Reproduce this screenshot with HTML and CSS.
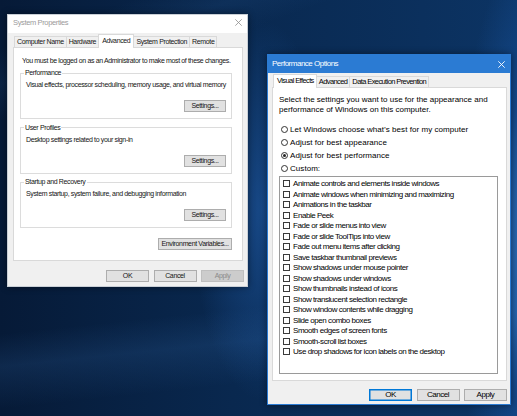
FILE: index.html
```html
<!DOCTYPE html>
<html lang="en">
<head>
<meta charset="utf-8">
<title>System Properties</title>
<link rel="stylesheet" href="styles.css">
</head>
<body>
<div class="desktop">

  <section class="win sysprop">
    <header class="titlebar">
      <span class="title">System Properties</span>
      <svg class="close" viewBox="0 0 7 7" width="7" height="7"><path d="M0.3 0.3L6.7 6.7M6.7 0.3L0.3 6.7"/></svg>
    </header>
    <div class="winbody">
      <nav class="tabs">
        <span class="tab">Computer Name</span>
        <span class="tab">Hardware</span>
        <span class="tab active">Advanced</span>
        <span class="tab">System Protection</span>
        <span class="tab">Remote</span>
      </nav>
      <div class="panel">
        <p class="note">You must be logged on as an Administrator to make most of these changes.</p>
        <fieldset class="group">
          <legend>Performance</legend>
          <p>Visual effects, processor scheduling, memory usage, and virtual memory</p>
          <div class="grp-actions"><button class="btn set">Settings...</button></div>
        </fieldset>
        <fieldset class="group">
          <legend>User Profiles</legend>
          <p>Desktop settings related to your sign-in</p>
          <div class="grp-actions"><button class="btn set">Settings...</button></div>
        </fieldset>
        <fieldset class="group">
          <legend>Startup and Recovery</legend>
          <p>System startup, system failure, and debugging information</p>
          <div class="grp-actions"><button class="btn set">Settings...</button></div>
        </fieldset>
        <div class="env"><button class="btn envbtn">Environment Variables...</button></div>
      </div>
      <footer class="actions">
        <button class="btn act">OK</button>
        <button class="btn act">Cancel</button>
        <button class="btn act" disabled>Apply</button>
      </footer>
    </div>
  </section>

  <section class="win perf">
    <header class="titlebar">
      <span class="title">Performance Options</span>
      <svg class="close" viewBox="0 0 7 7" width="7" height="7"><path d="M0.3 0.3L6.7 6.7M6.7 0.3L0.3 6.7"/></svg>
    </header>
    <div class="winbody">
      <nav class="tabs">
        <span class="tab active">Visual Effects</span>
        <span class="tab">Advanced</span>
        <span class="tab">Data Execution Prevention</span>
      </nav>
      <div class="panel">
        <p class="intro">Select the settings you want to use for the appearance and performance of Windows on this computer.</p>
        <div class="radios">
          <div class="radio"><span class="rb"></span>Let Windows choose what’s best for my computer</div>
          <div class="radio"><span class="rb"></span>Adjust for best appearance</div>
          <div class="radio"><span class="rb on"></span>Adjust for best performance</div>
          <div class="radio"><span class="rb"></span>Custom:</div>
        </div>
        <div class="list">
          <div class="item"><span class="cb"></span>Animate controls and elements inside windows</div>
          <div class="item"><span class="cb"></span>Animate windows when minimizing and maximizing</div>
          <div class="item"><span class="cb"></span>Animations in the taskbar</div>
          <div class="item"><span class="cb"></span>Enable Peek</div>
          <div class="item"><span class="cb"></span>Fade or slide menus into view</div>
          <div class="item"><span class="cb"></span>Fade or slide ToolTips into view</div>
          <div class="item"><span class="cb"></span>Fade out menu items after clicking</div>
          <div class="item"><span class="cb"></span>Save taskbar thumbnail previews</div>
          <div class="item"><span class="cb"></span>Show shadows under mouse pointer</div>
          <div class="item"><span class="cb"></span>Show shadows under windows</div>
          <div class="item"><span class="cb"></span>Show thumbnails instead of icons</div>
          <div class="item"><span class="cb"></span>Show translucent selection rectangle</div>
          <div class="item"><span class="cb"></span>Show window contents while dragging</div>
          <div class="item"><span class="cb"></span>Slide open combo boxes</div>
          <div class="item"><span class="cb"></span>Smooth edges of screen fonts</div>
          <div class="item"><span class="cb"></span>Smooth-scroll list boxes</div>
          <div class="item"><span class="cb"></span>Use drop shadows for icon labels on the desktop</div>
        </div>
      </div>
      <footer class="actions">
        <button class="btn act default">OK</button>
        <button class="btn act">Cancel</button>
        <button class="btn act">Apply</button>
      </footer>
    </div>
  </section>

</div>
</body>
</html>
```

FILE: styles.css
```css
* { box-sizing: border-box; }

html, body {
  margin: 0;
  padding: 0;
}

body {
  width: 517px;
  height: 416px;
  overflow: hidden;
  font-family: "Liberation Sans", Arial, sans-serif;
}

.desktop {
  position: relative;
  width: 517px;
  height: 416px;
  overflow: hidden;
  background:
    radial-gradient(ellipse 90px 320px at 545px 250px, rgba(70, 150, 235, 0.9), rgba(30, 100, 190, 0.4) 55%, rgba(20, 70, 150, 0) 100%),
    radial-gradient(ellipse 70px 190px at 262px 210px, rgba(40, 110, 200, 0.45), rgba(40, 110, 200, 0) 100%),
    linear-gradient(174deg, rgba(60, 120, 190, 0) 71%, rgba(60, 120, 190, 0.16) 78%, rgba(60, 120, 190, 0) 87%),
    linear-gradient(160deg, rgba(60, 120, 190, 0) 8%, rgba(60, 120, 190, 0.10) 14%, rgba(60, 120, 190, 0) 20%),
    linear-gradient(90deg, #061a37 0%, #09284f 45%, #0c3464 100%);
}

/* ---------- windows ---------- */
.win {
  position: absolute;
  display: flex;
  flex-direction: column;
  background: #f0f0f0;
  box-shadow: 0 0 7px rgba(0, 0, 0, 0.45);
}

.titlebar {
  flex: none;
  display: flex;
  justify-content: space-between;
  height: 18px;
}

.close {
  flex: none;
  fill: none;
}

.winbody {
  flex: 1;
  display: flex;
  flex-direction: column;
  min-height: 0;
}

.tabs {
  flex: none;
  height: 14px;
  display: flex;
  align-items: flex-end;
  padding-left: 1px;
  position: relative;
  z-index: 1;
}

.tab {
  height: 11px;
  line-height: 10px;
  padding: 0 2px;
  border: 1px solid #d9d9d9;
  border-bottom: none;
  margin-right: -1px;
  background: #f0f0f0;
  white-space: nowrap;
}

.tab.active {
  height: 14px;
  margin-bottom: -1px;
  line-height: 11px;
  background: #fff;
  padding: 0 3px;
  position: relative;
  z-index: 2;
}

.panel {
  flex: none;
  background: #fff;
  border: 1px solid #d9d9d9;
  display: flex;
  flex-direction: column;
}

.actions {
  flex: 1;
  display: flex;
  justify-content: flex-end;
  align-items: flex-start;
  gap: 4.5px;
}

.btn {
  font: inherit;
  letter-spacing: inherit;
  color: inherit;
  height: 12px;
  line-height: 10px;
  padding: 0;
  margin: 0;
  background: #e1e1e1;
  border: 1px solid #adadad;
  border-radius: 0;
  white-space: nowrap;
}

.btn:disabled {
  background: #cccccc;
  border-color: #bfbfbf;
  color: #8a8a8a;
}

.btn.default {
  border-color: #0078d7;
  box-shadow: inset 0 0 0 0.5px #0078d7;
}

.act { width: 43px; }

/* ---------- System Properties ---------- */
.sysprop {
  left: 7px;
  top: 14px;
  width: 241px;
  height: 273px;
  border: 1px solid #c9cfd6;
  font-size: 7px;
  letter-spacing: -0.36px;
  color: #151515;
}

.sysprop .titlebar {
  background: #fff;
  align-items: flex-start;
  padding: 3px 5px 0 5px;
}

.sysprop .title {
  font-size: 7.5px;
  line-height: 9px;
  color: #9b9b9b;
}

.sysprop .close {
  margin-top: 1px;
  stroke: #8e8e8e;
  stroke-width: 0.8;
}

.sysprop .winbody {
  padding: 0 4px 0 5px;
}

.sysprop .panel {
  height: 214px;
  padding: 8px 10px 0 6px;
}

.note {
  margin: 0;
  padding-left: 2px;
  line-height: 10px;
}

.group {
  margin: 2px 0 0 0;
  padding: 2px 5px 6px 5px;
  border: 1px solid #dcdcdc;
  min-width: 0;
}

.group + .group {
  margin-top: 3.5px;
}

.group legend {
  padding: 0 1px;
  margin-left: -2px;
  line-height: 10px;
}

.group p {
  margin: 0;
  line-height: 10px;
}

.grp-actions {
  display: flex;
  justify-content: flex-end;
  margin-top: 10px;
}

.set { width: 42px; }

.env {
  display: flex;
  justify-content: flex-end;
  margin-top: 9.5px;
}

.envbtn { width: 74px; }

.sysprop .actions {
  padding-top: 9px;
  margin-right: -1px;
}

/* ---------- Performance Options ---------- */
.perf {
  left: 267px;
  top: 54px;
  width: 244px;
  height: 351px;
  border: 1px solid #2b7bd3;
  font-size: 8px;
  letter-spacing: -0.45px;
  color: #000;
}

.perf .titlebar {
  background: #2b7bd3;
  color: #fff;
  align-items: center;
  padding: 0 5px 0 4px;
}

.perf .title {
  line-height: 10px;
  letter-spacing: -0.5px;
}

.perf .close {
  stroke: #fff;
  stroke-width: 0.9;
}

.perf .winbody {
  padding: 0 3px 0 4px;
}

.perf .tab {
  font-size: 7.5px;
  letter-spacing: -0.6px;
}

.perf .tab.active {
  padding: 0 2px 0 3px;
}

.perf .panel {
  height: 294px;
  padding: 7px 8px 6px 6px;
}

.intro {
  margin: 0;
  line-height: 10px;
  letter-spacing: 0;
}

.radios {
  margin-top: 7.5px;
  display: flex;
  flex-direction: column;
  letter-spacing: 0.05px;
}

.radio {
  display: flex;
  align-items: center;
  gap: 2px;
  height: 13px;
  padding-left: 2px;
  white-space: nowrap;
}

.rb {
  flex: none;
  width: 7px;
  height: 7px;
  border: 1px solid #333;
  border-radius: 50%;
  background: #fff;
  display: flex;
  align-items: center;
  justify-content: center;
}

.rb.on::after {
  content: "";
  width: 3px;
  height: 3px;
  border-radius: 50%;
  background: #222;
}

.list {
  margin-top: 1.5px;
  height: 198px;
  border: 1px solid #9a9a9a;
  background: #fff;
  padding: 1.5px 0 0 3px;
  display: flex;
  flex-direction: column;
}

.item {
  display: flex;
  align-items: center;
  gap: 3px;
  height: 10.5px;
  white-space: nowrap;
}

.cb {
  flex: none;
  width: 7px;
  height: 7px;
  border: 1px solid #3a3a3a;
  background: #fff;
}

.perf .actions {
  padding-top: 8px;
}
```
